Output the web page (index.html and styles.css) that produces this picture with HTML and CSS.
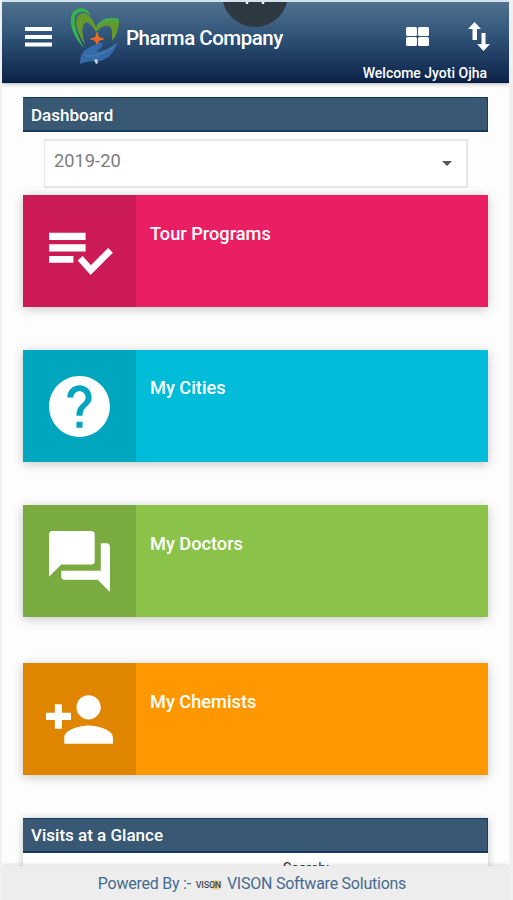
FILE: index.html
```html
<!DOCTYPE html>
<html lang="en">
<head>
  <meta charset="UTF-8">
  <meta name="viewport" content="width=device-width, initial-scale=1">
  <title>Pharma Company</title>
  <link rel="stylesheet" href="styles.css">
</head>
<body>

  <div class="app">
    <header class="navbar">
      <div class="navbar-row">
        <svg class="menu" viewBox="0 0 27 20"><path d="M0 0h27v4H0zM0 8h27v4H0zM0 15.500h27v4H0z"/></svg>
        <svg class="logo" viewBox="0 0 50 58">
          <path d="M14 41C4 31-2 16 2 7 6-1 17-1 21 9 15 3 8 3 5 9c-2 8 3 21 9 32z" fill="#35b64c"/>
          <path d="M15 38C9 28 3 16 8 9c6-7 14 0 18 11 5-8 14-10 23-7 0 9-2 15-7 21 0-6 1-13-3-15-5-1-9 2-13 6-4-7-9-12-12-8-3 5-1 13 1 21z" fill="#64992b"/>
          <path d="M26 20c4-8 14-11 23-8v3c-8-2-16 0-23 5z" fill="#46a950"/>
          <path d="M27 25.500l1.500 5 5 1.500-5 1.500-1.500 5-1.500-5-5-1.500 5-1.500z" fill="#f26a21" stroke="#f26a21"/>
          <path d="M10 57c0-9 3-14 10-17l9-4c4-1 5 2 2 5l-5 4c8-1 14-4 22-10-4 11-10 17-18 19-8 0-13 0-20 3z" fill="#356ba9"/>
          <path d="M15 49c10 1 22-3 30-11" fill="none" stroke="#4e7eb6"/>
          <path d="M24 53l3-1 1 4-2 1z" fill="#c4dcec"/>
        </svg>
        <h1 class="brand">Pharma Company</h1>
        <svg class="grid" viewBox="0 0 23 19">
          <rect width="11" height="9" rx="1.500"/><rect x="12" width="11" height="9" rx="1.500"/>
          <rect y="10" width="11" height="9" rx="1.500"/><rect x="12" y="10" width="11" height="9" rx="1.500"/>
        </svg>
        <svg class="swap" viewBox="0 0 22 29"><path d="M6.500 0l6.500 7H9v11H4.500V7H0zM13.500 11h4v11H22l-6.500 7L9 22h4.500z"/></svg>
      </div>
      <div class="welcome">Welcome Jyoti Ojha</div>
      <div class="pull-tab"><svg viewBox="0 0 22 5"><path d="M1 0h4L4 4H2zM17 0h4l-1 4h-2z"/></svg></div>
    </header>

    <main class="content">
      <h2 class="panel-title">Dashboard</h2>
      <div class="year-select"><span>2019-20</span><i class="caret"></i></div>

      <div class="info-box pink">
        <div class="icon"><svg viewBox="0 0 24 24"><path d="M2 5.800h12v2.400H2zM2 9.600h12V12H2zM2 13.500h8v2.200H2z"/><path d="M12.200 14.200l3.500 3.900 6.500-6.500" fill="none" stroke="#fff" stroke-width="2.200"/></svg></div>
        <div class="text">Tour Programs</div>
      </div>
      <div class="info-box cyan">
        <div class="icon"><svg viewBox="0 0 24 24"><path d="M12 2C6.480 2 2 6.480 2 12s4.480 10 10 10 10-4.480 10-10S17.520 2 12 2zm1 17h-2v-2h2v2zm2.070-7.750l-.9.920C13.450 12.900 13 13.500 13 15h-2v-.5c0-1.100.45-2.100 1.170-2.830l1.240-1.260c.37-.36.59-.86.59-1.410 0-1.100-.9-2-2-2s-2 .9-2 2H8c0-2.210 1.790-4 4-4s4 1.790 4 4c0 .88-.36 1.680-.93 2.250z"/></svg></div>
        <div class="text">My Cities</div>
      </div>
      <div class="info-box green">
        <div class="icon"><svg viewBox="0 0 24 24"><path d="M21 6h-2v9H6v2c0 .55.45 1 1 1h11l4 4V7c0-.55-.45-1-1-1zm-4 6V3c0-.55-.45-1-1-1H3c-.55 0-1 .45-1 1v14l4-4h10c.55 0 1-.45 1-1z"/></svg></div>
        <div class="text">My Doctors</div>
      </div>
      <div class="info-box orange">
        <div class="icon"><svg viewBox="0 0 24 24"><path d="M15 12c2.210 0 4-1.790 4-4s-1.790-4-4-4-4 1.790-4 4 1.790 4 4 4zM6.200 9.800V7H3.900v2.800H1v2.400h2.900V15h2.300v-2.800H9.200V9.800zM15 14c-2.670 0-8 1.340-8 4v2h16v-2c0-2.660-5.330-4-8-4z"/></svg></div>
        <div class="text">My Chemists</div>
      </div>

      <section class="visits">
        <h2 class="panel-title">Visits at a Glance</h2>
        <div class="search">Search:</div>
      </section>
    </main>

    <footer class="footer">
      <span>Powered By :-</span>
      <span class="vison">VISON</span>
      <span>VISON Software Solutions</span>
    </footer>
  </div>

</body>
</html>
```
FILE: styles.css
```css
* {
  box-sizing: border-box;
}

body {
  margin: 0;
  background: #f0f0f1;
  font-family: Roboto, sans-serif;
}

h1, h2 {
  margin: 0;
}

svg {
  display: block;
  fill: #fff;
}

.app {
  display: flex;
  flex-direction: column;
  width: 507px;
  height: 900px;
  margin-left: 2px;
  border-top: 2px solid #d5e3ec;
  background: #fdfdfd;
  overflow: hidden;
}

.navbar {
  position: relative;
  flex: none;
  height: 81px;
  background: linear-gradient(#50718f, #32557a 40%, #0c2349);
  border-bottom: 1px solid #06183b;
  box-shadow: 0 1px 4px rgba(0,0,0,0.3);
  color: #fff;
}

.navbar-row {
  display: flex;
  align-items: center;
  height: 64px;
  padding: 4px 19px 0 23px;
}

.menu {
  width: 27px;
  height: 20px;
  margin-top: 1px;
}

.logo {
  width: 50px;
  height: 58px;
  margin: 0 0 0 18px;
}

.brand {
  flex: 1;
  margin: 4px 0 0 6px;
  font-size: 20.5px;
  font-weight: 500;
  letter-spacing: -0.5px;
  white-space: nowrap;
}

.grid {
  width: 23px;
  height: 19px;
}

.swap {
  width: 22px;
  height: 29px;
  margin-left: 39px;
}

.welcome {
  padding-right: 22px;
  font-size: 14px;
  font-weight: 500;
  line-height: 15px;
  text-align: right;
}

/* round tab hanging over the top edge */
.pull-tab {
  position: absolute;
  top: -2px;
  left: 220px;
  width: 66px;
  height: 27px;
  overflow: hidden;
}

.pull-tab::before {
  content: "";
  position: absolute;
  bottom: 0;
  width: 66px;
  height: 66px;
  border-radius: 50%;
  background: #2f3942;
}

.pull-tab svg {
  position: relative;
  width: 22px;
  height: 5px;
  margin: 0 auto;
}

.content {
  flex: 1;
  min-height: 0;
  padding: 14px 21px 0 21px;
  overflow: hidden;
}

.panel-title {
  height: 35px;
  padding-left: 8px;
  border: 1px solid #163a62;
  border-width: 1px 1px 2px 0;
  background: #395873;
  color: #fff;
  font-size: 17px;
  font-weight: 500;
  line-height: 34px;
}

.year-select {
  display: flex;
  align-items: center;
  justify-content: space-between;
  height: 49px;
  margin: 7px 20px 7px 21px;
  padding: 0 14px 6px 9px;
  border: 2px solid #e6e6e6;
  border-left-width: 1px;
  background: #fff;
  color: #7c7c7c;
  font-size: 18.3px;
}

.caret {
  margin-top: 5px;
  border: 5px solid transparent;
  border-top-color: #555;
  border-bottom: 0;
}

.info-box {
  display: flex;
  height: 112px;
  margin-bottom: 43px;
  box-shadow: 0 2px 10px rgba(0,0,0,0.22);
  color: #fff;
}

.info-box .icon {
  display: flex;
  align-items: center;
  justify-content: center;
  width: 113px;
  background: rgba(0,0,0,0.12);
}

.info-box .icon svg {
  width: 73px;
  height: 73px;
}

.info-box .text {
  padding: 27px 0 0 14px;
  font-size: 18.2px;
  line-height: 23px;
  font-weight: 500;
}

.pink {
  background: #e91e63;
}

.cyan {
  background: #00bcd9;
}

.cyan .text {
  line-height: 21px;
}

.green {
  margin-bottom: 46px;
  background: #8bc34a;
}

.orange {
  background: #ff9800;
}

.visits {
  height: 80px;
  background: #fff;
  box-shadow: 0 1px 8px rgba(0,0,0,0.22);
}

.visits .panel-title {
  line-height: 32px;
}

.search {
  padding: 7px 0 0 260px;
  color: #333;
  font-size: 14px;
  line-height: 16px;
}

.footer {
  display: flex;
  flex: none;
  align-items: center;
  justify-content: center;
  height: 34px;
  padding-right: 7px;
  background: #ededee;
  box-shadow: 0 -1px 4px rgba(0,0,0,0.15);
  color: #456b8f;
  font-size: 16px;
  letter-spacing: -0.24px;
  z-index: 1;
}

.vison {
  width: 29px;
  margin: 3px 4px 0 3px;
  background: radial-gradient(circle at 22px 50%, #f2c37b 0 3px, transparent 7px);
  color: #444a58;
  font-size: 9px;
  font-weight: 500;
  text-align: center;
}
```
